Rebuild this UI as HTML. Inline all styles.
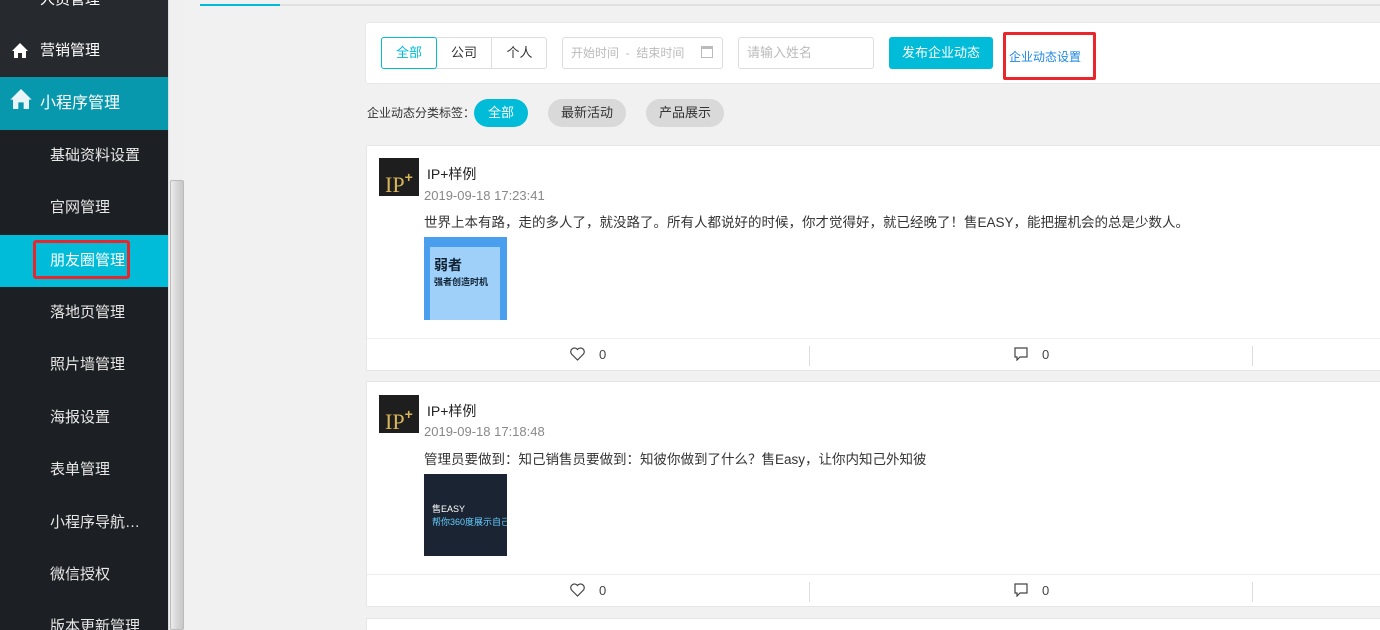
<!DOCTYPE html>
<html style="width:1380px;height:630px;overflow:hidden"><head><meta charset="utf-8"><style>
*{margin:0;padding:0;box-sizing:border-box}
body{width:1380px;height:630px;overflow:hidden;background:#f1f1f1;font-family:"Liberation Sans","Noto Sans CJK SC",sans-serif;position:relative}
.side{position:absolute;left:0;top:0;width:168px;height:630px;background:#1c1f23}
.top{position:absolute;left:0;width:168px;background:#262a2e;color:#fff;font-size:15px}
.it{position:absolute;left:0;width:168px;height:52px;color:#e8e8e8;font-size:15px;line-height:52px;padding-left:50px}
.sb{position:absolute;left:168px;top:0;width:17px;height:630px;background:#f0f0f0;border-left:1px solid #ddd}
.thumb{position:absolute;left:170px;top:180px;width:14px;height:450px;background:linear-gradient(90deg,#ececec,#d6d6d6,#c8c8c8);border:1px solid #bbb;border-radius:2px}
.card{position:absolute;background:#fff;border:1px solid #e8e8e8}
.btn{position:absolute;font-size:13px}
.tag{position:absolute;top:99px;height:28px;border-radius:14px;background:#d9d9d9;color:#333;font-size:13px;line-height:28px;text-align:center}
.post{position:absolute;left:366px;width:1020px;background:#fff;border:1px solid #e6e6e6}
.av{position:absolute;left:12px;width:40px;height:38px;background:#1e1e1e;color:#d9b65a;font-family:"Liberation Serif",serif;font-size:22px;line-height:38px;padding-left:6px}
.av sup{font-family:"Liberation Sans";font-size:14px;font-weight:bold;vertical-align:10px}
.nm{position:absolute;left:60px;font-size:14px;color:#222}
.dt{position:absolute;left:57px;font-size:13px;color:#888}
.tx{position:absolute;left:57px;font-size:13.5px;color:#333}
.foot{position:absolute;left:0;right:0;height:33px;border-top:1px solid #eee;font-size:13px;color:#444}
.foot .d{position:absolute;top:7px;width:1px;height:20px;background:#ddd}
.foot svg{position:absolute;top:8px}
.foot .n{position:absolute;top:8px}
</style></head><body>
<div class="side">
 <div class="top" style="top:-26px;height:52px;line-height:52px;padding-left:40px">人员管理</div>
 <div class="top" style="top:25px;height:52px;line-height:52px;padding-left:40px"><svg style="position:absolute;left:12px;top:18px" width="16" height="15" viewBox="0 0 16 15"><path d="M8 0L0 8h2v7h4v-5h4v5h4V8h2z" fill="#fff"/></svg>营销管理</div>
 <div class="top" style="top:77px;height:53px;line-height:53px;padding-left:40px;background:#0898ae;font-size:16px"><svg style="position:absolute;left:10px;top:12px" width="22" height="20" viewBox="0 0 16 15"><path d="M8 0L0 8h2v7h4v-5h4v5h4V8h2z" fill="#e8f4f6"/></svg>小程序管理</div>
 <div class="it" style="top:130px">基础资料设置</div>
 <div class="it" style="top:182px">官网管理</div>
 <div class="it" style="top:235px;background:#00bcd9;color:#fff">朋友圈管理</div>
 <div style="position:absolute;left:33px;top:240px;width:97px;height:39px;border:3px solid #e8262b;border-radius:3px"></div>
 <div class="it" style="top:287px">落地页管理</div>
 <div class="it" style="top:339px">照片墙管理</div>
 <div class="it" style="top:392px">海报设置</div>
 <div class="it" style="top:444px">表单管理</div>
 <div class="it" style="top:497px">小程序导航…</div>
 <div class="it" style="top:549px">微信授权</div>
 <div class="it" style="top:601px">版本更新管理</div>
</div>
<div class="sb"></div><div class="thumb"></div>
<div style="position:absolute;left:200px;top:4px;width:1180px;height:2px;background:#e0e0e0"></div>
<div style="position:absolute;left:200px;top:4px;width:80px;height:2px;background:#00bcd9"></div>

<div class="card" style="left:365px;top:22px;width:1020px;height:62px;border-radius:3px"></div>
<div class="btn" style="left:381px;top:37px;width:166px;height:32px;border:1px solid #ddd;border-radius:3px"></div>
<div class="btn" style="left:381px;top:37px;width:56px;height:32px;border:1px solid #00bcd9;border-radius:3px;color:#00bcd9;line-height:30px;text-align:center">全部</div>
<div class="btn" style="left:437px;top:37px;width:55px;height:32px;line-height:32px;text-align:center;border-right:1px solid #ddd;color:#333">公司</div>
<div class="btn" style="left:492px;top:37px;width:55px;height:32px;line-height:32px;text-align:center;color:#333">个人</div>
<div class="btn" style="left:562px;top:37px;width:161px;height:32px;border:1px solid #ddd;border-radius:3px;color:#bbb;line-height:30px;padding-left:8px;font-size:12px">开始时间 &nbsp;- &nbsp;结束时间<span style="position:absolute;right:9px;top:8px;width:12px;height:12px;border:1px solid #bbb;border-top:3px solid #bbb"></span></div>
<div class="btn" style="left:738px;top:37px;width:136px;height:32px;border:1px solid #ddd;border-radius:3px;color:#bbb;line-height:30px;padding-left:8px">请输入姓名</div>
<div class="btn" style="left:889px;top:37px;width:104px;height:32px;background:#00bcd9;color:#fff;border-radius:3px;line-height:32px;text-align:center">发布企业动态</div>
<div class="btn" style="left:1003px;top:32px;width:93px;height:48px;border:3px solid #e8262b;border-radius:2px;color:#1e88e5;font-size:12px;padding:13px 0 0 3px">企业动态设置</div>

<div style="position:absolute;left:367px;top:104px;font-size:12px;color:#333">企业动态分类标签：</div>
<div class="tag" style="left:474px;width:54px;background:#00bcd9;color:#fff">全部</div>
<div class="tag" style="left:548px;width:78px">最新活动</div>
<div class="tag" style="left:646px;width:78px">产品展示</div>

<div class="post" style="top:145px;height:226px">
 <div class="av" style="top:12px">IP<sup>+</sup></div>
 <div class="nm" style="top:18px">IP+样例</div>
 <div class="dt" style="top:42px">2019-09-18 17:23:41</div>
 <div class="tx" style="top:65px">世界上本有路，走的多人了，就没路了。所有人都说好的时候，你才觉得好，就已经晚了！售EASY，能把握机会的总是少数人。</div>
 <div style="position:absolute;left:57px;top:91px;width:83px;height:83px;background:#4a9eee"><div style="position:absolute;left:6px;top:10px;width:70px;height:73px;background:#9fd0fa;font-size:14px;font-weight:bold;color:#123;padding:8px 4px">弱者<div style="font-size:9px">强者创造时机</div></div></div>
 <div class="foot" style="top:192px">
  <svg style="left:203px" width="15" height="14" viewBox="0 0 15 14"><path d="M7.5 13L1.5 7A3.3 3.3 0 0 1 7.5 2.5A3.3 3.3 0 0 1 13.5 7Z" fill="none" stroke="#444" stroke-width="1.2"/></svg><span class="n" style="left:232px">0</span><div class="d" style="left:442px"></div>
  <svg style="left:647px" width="14" height="14" viewBox="0 0 14 14"><path d="M1 1h12v9H6l-3 3v-3H1z" fill="none" stroke="#444" stroke-width="1.2"/></svg><span class="n" style="left:675px">0</span><div class="d" style="left:885px"></div>
 </div>
</div>

<div class="post" style="top:381px;height:226px">
 <div class="av" style="top:13px">IP<sup>+</sup></div>
 <div class="nm" style="top:19px">IP+样例</div>
 <div class="dt" style="top:42px">2019-09-18 17:18:48</div>
 <div class="tx" style="top:66px">管理员要做到：知己销售员要做到：知彼你做到了什么？售Easy，让你内知己外知彼</div>
 <div style="position:absolute;left:57px;top:92px;width:83px;height:82px;background:#1a2432;color:#fff;font-size:9px;padding:28px 0 0 8px;overflow:hidden;white-space:nowrap">售EASY<br><span style="color:#6cf">帮你360度展示自己</span></div>
 <div class="foot" style="top:192px">
  <svg style="left:203px" width="15" height="14" viewBox="0 0 15 14"><path d="M7.5 13L1.5 7A3.3 3.3 0 0 1 7.5 2.5A3.3 3.3 0 0 1 13.5 7Z" fill="none" stroke="#444" stroke-width="1.2"/></svg><span class="n" style="left:232px">0</span><div class="d" style="left:442px"></div>
  <svg style="left:647px" width="14" height="14" viewBox="0 0 14 14"><path d="M1 1h12v9H6l-3 3v-3H1z" fill="none" stroke="#444" stroke-width="1.2"/></svg><span class="n" style="left:675px">0</span><div class="d" style="left:885px"></div>
 </div>
</div>
<div class="post" style="top:618px;height:30px"></div>
</body></html>
